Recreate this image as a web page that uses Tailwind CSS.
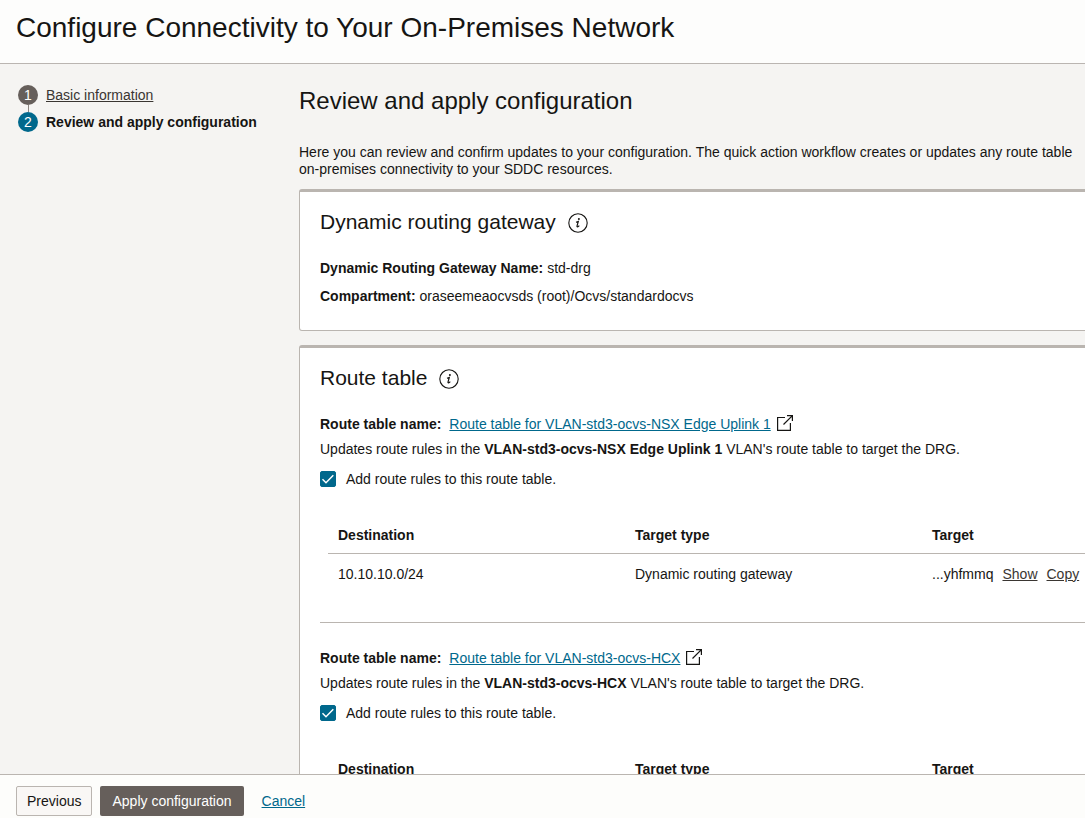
<!DOCTYPE html>
<html lang="en">

<head>
    <meta charset="UTF-8">
    <meta name="viewport" content="width=device-width, initial-scale=1.0">
    <title>Configure Connectivity to Your On-Premises Network</title>
    <script src="https://cdn.jsdelivr.net/npm/@tailwindcss/browser@4"></script>
</head>

<body class="h-screen flex flex-col overflow-hidden bg-[#f5f4f2] font-['Liberation_Sans',Arial,sans-serif] text-[14px] text-[#161513]">
<!-- Title -->
<header class="shrink-0 bg-[#fdfdfc] border-b border-[#bab5b1] px-4 pt-2 pb-[15px]">
    <h1 class="text-[28px] leading-10 whitespace-nowrap">Configure Connectivity to Your On-Premises Network</h1>
</header>

<div class="flex flex-1 min-h-0 overflow-hidden">
    <!-- Steps -->
    <nav class="w-[299px] shrink-0 pt-[21px] pl-[18px]" aria-label="Steps">
        <ol class="leading-5">
            <li class="flex items-center gap-2">
                <span class="size-5 rounded-full bg-[#665f5b] text-white text-center">1</span>
                <a href="#" class="underline text-[#3a3632]">Basic information</a>
            </li>
            <li class="ml-[10px] h-[7px] border-l border-[#8b8580]"></li>
            <li class="flex items-center gap-2" aria-current="step">
                <span class="size-5 rounded-full bg-[#00688c] text-white text-center">2</span>
                <span class="font-bold">Review and apply configuration</span>
            </li>
        </ol>
    </nav>

    <!-- Content -->
    <main class="min-w-[941px] flex-1 pt-[21px]">
        <h2 class="text-[24px] leading-8">Review and apply configuration</h2>
        <p class="mt-[27px] leading-[17px]">Here you can review and confirm updates to your configuration. The quick action workflow creates or updates any route table<br>on-premises connectivity to your SDDC resources.</p>

        <!-- Gateway -->
        <section class="mt-[11px] bg-white border border-t-3 border-[#bab5b0] rounded-[3px] px-5 pt-4 pb-5">
            <div class="flex items-center gap-3">
                <h3 class="text-[21px] leading-7">Dynamic routing gateway</h3>
                <button type="button" aria-label="About dynamic routing gateway">
                    <svg class="size-5 mt-0.5" viewBox="0 0 20 20" fill="none">
                        <circle cx="10" cy="10" r="9.2" stroke="#161513" stroke-width="1.1"/>
                        <circle cx="10.9" cy="6" r="1" fill="#161513"/>
                        <path d="M8 9.3L10.3 8.5L9 13.2C8.8 14.2 9.8 14.1 11.3 12.6" stroke="#161513" stroke-width="1.2"/>
                    </svg>
                </button>
            </div>
            <div class="mt-[18px] leading-7">
                <p><b>Dynamic Routing Gateway Name:</b> std-drg</p>
                <p><b>Compartment:</b> oraseemeaocvsds (root)/Ocvs/standardocvs</p>
            </div>
        </section>

        <!-- Route tables -->
        <section class="mt-[14px] bg-white border border-t-3 border-[#bab5b0] rounded-[3px] px-5 pt-4 pb-5">
            <div class="flex items-center gap-3">
                <h3 class="text-[21px] leading-7">Route table</h3>
                <button type="button" aria-label="About route table">
                    <svg class="size-5 mt-0.5" viewBox="0 0 20 20" fill="none">
                        <circle cx="10" cy="10" r="9.2" stroke="#161513" stroke-width="1.1"/>
                        <circle cx="10.9" cy="6" r="1" fill="#161513"/>
                        <path d="M8 9.3L10.3 8.5L9 13.2C8.8 14.2 9.8 14.1 11.3 12.6" stroke="#161513" stroke-width="1.2"/>
                    </svg>
                </button>
            </div>

            <div class="mt-5 pb-[29px] border-b border-[#bab5b0]">
                <div class="flex items-center gap-2 leading-6">
                    <b>Route table name:</b>
                    <a href="#" class="flex items-center gap-[6px] text-[#00688c]">
                        <span class="underline">Route table for VLAN-std3-ocvs-NSX Edge Uplink 1</span>
                        <svg class="size-4 -mt-0.5" viewBox="0 0 16 16" fill="none" stroke="#161513" stroke-width="1.2">
                            <path d="M8 2.5H0.6V15.4H13.4V8M10 0.6H15.4V6M15.4 0.6L6.5 9.5"/>
                        </svg>
                    </a>
                </div>
                <p class="mt-px leading-6">Updates route rules in the <b>VLAN-std3-ocvs-NSX Edge Uplink 1</b> VLAN's route table to target the DRG.</p>
                <label class="mt-1.5 flex items-center gap-[10px] leading-6">
                    <span class="relative size-4">
                        <input type="checkbox" checked class="block size-4 appearance-none rounded-[2px] border border-[#8b8580] checked:border-[#00688c] checked:bg-[#00688c]">
                        <svg class="absolute inset-0 size-4 pointer-events-none" viewBox="0 0 16 16" fill="none" stroke="#fff" stroke-width="1.5">
                            <path d="M2.5 8.2L6 11.7L13.3 4.3"/>
                        </svg>
                    </span>
                    Add route rules to this route table.
                </label>
                <table class="mt-[26px] ml-2 w-[calc(100%-8px)] table-fixed text-left">
                    <thead>
                    <tr class="h-9 border-b border-[#bab5b0]">
                        <th class="px-[10px] pt-0.5">Destination</th>
                        <th class="px-[10px] pt-0.5">Target type</th>
                        <th class="px-[10px] pt-0.5">Target</th>
                    </tr>
                    </thead>
                    <tbody>
                    <tr class="h-10">
                        <td class="px-[10px] pt-0.5">10.10.10.0/24</td>
                        <td class="px-[10px] pt-0.5">Dynamic routing gateway</td>
                        <td class="px-[10px] pt-0.5">
                            <div class="flex gap-[9px]">
                                <span>...yhfmmq</span>
                                <a href="#" class="underline text-[#3a3632]">Show</a>
                                <a href="#" class="underline text-[#3a3632]">Copy</a>
                            </div>
                        </td>
                    </tr>
                    </tbody>
                </table>
            </div>

            <div class="mt-[23px]">
                <div class="flex items-center gap-2 leading-6">
                    <b>Route table name:</b>
                    <a href="#" class="flex items-center gap-[6px] text-[#00688c]">
                        <span class="underline">Route table for VLAN-std3-ocvs-HCX</span>
                        <svg class="size-4 -mt-0.5" viewBox="0 0 16 16" fill="none" stroke="#161513" stroke-width="1.2">
                            <path d="M8 2.5H0.6V15.4H13.4V8M10 0.6H15.4V6M15.4 0.6L6.5 9.5"/>
                        </svg>
                    </a>
                </div>
                <p class="mt-px leading-6">Updates route rules in the <b>VLAN-std3-ocvs-HCX</b> VLAN's route table to target the DRG.</p>
                <label class="mt-1.5 flex items-center gap-[10px] leading-6">
                    <span class="relative size-4">
                        <input type="checkbox" checked class="block size-4 appearance-none rounded-[2px] border border-[#8b8580] checked:border-[#00688c] checked:bg-[#00688c]">
                        <svg class="absolute inset-0 size-4 pointer-events-none" viewBox="0 0 16 16" fill="none" stroke="#fff" stroke-width="1.5">
                            <path d="M2.5 8.2L6 11.7L13.3 4.3"/>
                        </svg>
                    </span>
                    Add route rules to this route table.
                </label>
                <table class="mt-[26px] ml-2 w-[calc(100%-8px)] table-fixed text-left">
                    <thead>
                    <tr class="h-9 border-b border-[#bab5b0]">
                        <th class="px-[10px] pt-0.5">Destination</th>
                        <th class="px-[10px] pt-0.5">Target type</th>
                        <th class="px-[10px] pt-0.5">Target</th>
                    </tr>
                    </thead>
                </table>
            </div>
        </section>
    </main>
</div>

<!-- Actions -->
<footer class="shrink-0 flex items-center bg-[#fdfdfb] border-t border-[#bab5b0] px-4 pt-[11px] pb-0.5">
    <button type="button" class="h-[30px] px-[10px] rounded-[2px] border border-[#bab5b0] bg-[#f9f7f5] hover:bg-[#efecea]">Previous</button>
    <button type="button" class="h-[30px] ml-2 px-3 rounded-[2px] bg-[#665f5b] text-white hover:bg-[#524c48]">Apply configuration</button>
    <a href="#" class="ml-[18px] underline text-[#00688c]">Cancel</a>
</footer>
</body>

</html>
